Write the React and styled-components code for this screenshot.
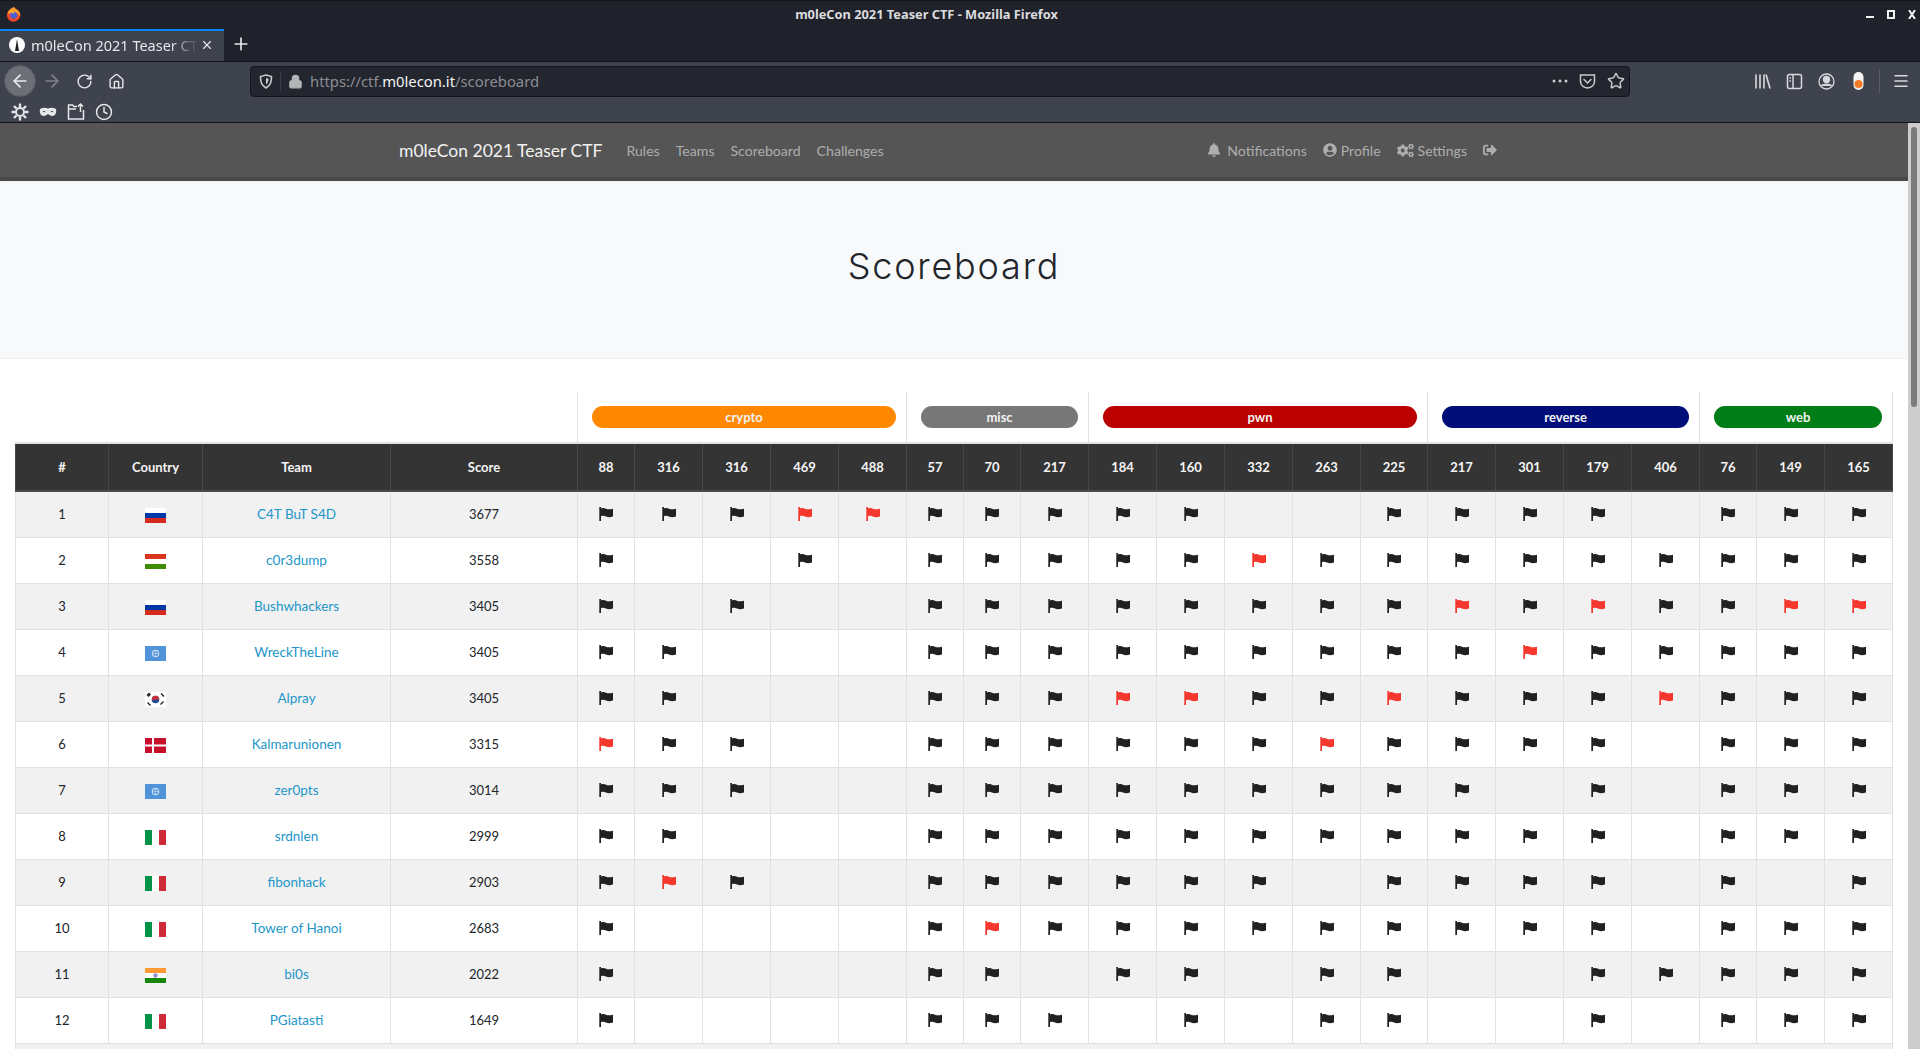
import React from "react"
import styled, { createGlobalStyle } from "styled-components"
import { FaBell, FaUserCircle, FaCogs, FaSignOutAlt } from "react-icons/fa"
import { ArrowLeft, ArrowRight, RotateCw, House, Lock, Star, Clock, X, Plus, Menu } from "lucide-react"

const GlobalStyle = createGlobalStyle`
  html, body {
    margin: 0;
    padding: 0;
    height: 100%;
    overflow: hidden;
    background: #fff;
  }
  * { box-sizing: border-box; }
`

const Frame = styled.div`
  height: 100vh;
  display: flex;
  flex-direction: column;
  overflow: hidden;
  font-family: "Noto Sans", sans-serif;
`

/* browser chrome */

const TitleBar = styled.div`
  height: 29px;
  flex: none;
  display: flex;
  align-items: center;
  padding: 0 0 2px 6px;
  background: #1f212b;
  border-top: 1px solid #14151b;
`

const WindowTitle = styled.div`
  margin-left: 773px;
  width: 265px;
  text-align: center;
  white-space: nowrap;
  font-size: 12.800px;
  font-weight: 700;
  color: #dcdcdf;
`

const WindowButtons = styled.div`
  margin-left: auto;
  display: flex;
  align-items: center;
  gap: 13px;
  padding-right: 4px;
`

const TabStrip = styled.div`
  height: 32px;
  flex: none;
  display: flex;
  align-items: stretch;
  background: #1f212b;
`

const Tab = styled.div`
  width: 224px;
  display: flex;
  align-items: center;
  padding: 0 10px 3px 9px;
  background: #3f434e;
  border-top: 2px solid #0a84ff;
  color: #e6e7ea;
`

const TabLabel = styled.span`
  margin-left: 6px;
  flex: 1;
  overflow: hidden;
  white-space: nowrap;
  font-size: 14.500px;
  mask-image: linear-gradient(to right, #000 82%, transparent 99%);
`

const NewTab = styled.div`
  margin-left: 7px;
  padding-bottom: 3px;
  display: flex;
  align-items: center;
  color: #e6e7ea;
`

const NavToolbar = styled.div`
  height: 39px;
  flex: none;
  display: flex;
  align-items: center;
  background: #3f434e;
  border-top: 1px solid #14151b;
`

const NavButtons = styled.div`
  width: 250px;
  display: flex;
  align-items: center;
  padding-left: 4px;
`

const BackCircle = styled.div`
  width: 32px;
  height: 32px;
  border-radius: 50%;
  background: #6c6f76;
  border: 1px solid #565962;
  display: flex;
  align-items: center;
  justify-content: center;
  color: #ececee;
`

const NavIcon = styled.div`
  width: 32px;
  display: flex;
  justify-content: center;
  color: ${p => (p.$dim ? "#80838b" : "#e6e7ea")};
`

const UrlBar = styled.div`
  width: 1380px;
  height: 31px;
  display: flex;
  align-items: center;
  background: #23252f;
  border: 1px solid #15161c;
  border-radius: 4px;
  color: #c9cace;
`

const ShieldBox = styled.div`
  width: 30px;
  height: 20px;
  display: flex;
  align-items: center;
  justify-content: center;
  border-right: 1px solid #3b3d47;
`

const LockBox = styled.div`
  width: 28px;
  margin-right: 1px;
  display: flex;
  justify-content: center;
  color: #b4b5b9;
`

const UrlText = styled.div`
  flex: 1;
  font-size: 14.800px;
  color: #8c8d93;
  white-space: nowrap;

  b {
    font-weight: 400;
    color: #f4f4f5;
  }
`

const UrlActions = styled.div`
  display: flex;
  align-items: center;
  gap: 11px;
  padding-right: 4px;
`

const ToolIcons = styled.div`
  flex: 1;
  display: flex;
  align-items: center;
  justify-content: flex-end;
  gap: 15px;
  color: #d8d9dc;
  padding-right: 10px;
`

const ToolSep = styled.div`
  width: 1px;
  height: 24px;
  background: #5b5e68;
  margin: 0 -3px;
`

const BookmarksBar = styled.div`
  height: 23px;
  flex: none;
  display: flex;
  align-items: center;
  gap: 10px;
  padding: 1px 0 0 11px;
  background: #3f434e;
  border-bottom: 1px solid #14151b;
  color: #e6e7ea;
`

const Viewport = styled.div`
  flex: 1;
  min-height: 0;
  display: flex;
`

const Page = styled.div`
  flex: 1;
  min-width: 0;
  overflow: hidden;
  background: #fff;
`

const ScrollTrack = styled.div`
  width: 12px;
  flex: none;
  padding: 4px 3px;
  background: #cdcdcd;
`

const ScrollThumb = styled.div`
  height: 280px;
  border-radius: 3px;
  background: #7c7c7c;
`

/* site navbar */

const Navbar = styled.nav`
  height: 58px;
  background: #555;
  border-bottom: 4px solid #494949;
`

const NavContainer = styled.div`
  width: 1110px;
  height: 100%;
  margin: 0 auto;
  display: flex;
  align-items: center;
  justify-content: space-between;
  font-family: Lato, sans-serif;
`

const NavLeft = styled.div`
  display: flex;
  align-items: center;
`

const Brand = styled.a`
  margin-right: 16px;
  font-size: 17.500px;
  color: #f2f2f2;
`

const NavLink = styled.a`
  display: flex;
  align-items: center;
  gap: 4px;
  padding: 0 8px;
  font-size: 14.100px;
  color: #aeaeae;
`

const NavRight = styled.div`
  display: flex;
  align-items: center;
  padding-right: 4px;
`

const BellIcon = styled(FaBell)`
  margin-right: 2px;
`

const Jumbotron = styled.header`
  height: 178px;
  margin-bottom: 33px;
  padding-bottom: 9px;
  display: flex;
  align-items: center;
  justify-content: center;
  background: #f8f9fa;
  border-top: 1px solid #eee;
  border-bottom: 1px solid #eef0f2;
  border-radius: 4px;
`

const Title = styled.h1`
  margin: 0;
  font-family: Inter, sans-serif;
  font-size: 36px;
  font-weight: 300;
  letter-spacing: 1.800px;
  color: #212529;
`

/* scoreboard */

const Wrap = styled.div`
  padding: 0 15px;
`

const Table = styled.table`
  width: 1876px;
  table-layout: fixed;
  border-collapse: collapse;
  font-family: Lato, sans-serif;
  font-size: 13px;
  color: #212529;
`

const Col = styled.col`
  width: ${p => p.$w}px;
`

const CategoryBlank = styled.th`
  height: 51px;
  padding: 0;
  border-bottom: 2px solid #dee2e6;
`

const CategoryCell = styled.th`
  padding: 0 10px 0 14px;
  border: 1px solid #dee2e6;
  border-top: 0;
  border-bottom: 2px solid #dee2e6;
`

const Pill = styled.div`
  height: 22px;
  line-height: 22px;
  border-radius: 11px;
  font-size: 13px;
  font-weight: 700;
  text-align: center;
  color: #f2f2f2;
  background: ${p => p.$color};
`

const HeadCell = styled.th`
  height: 48px;
  padding: 0;
  text-align: center;
  font-weight: 700;
  color: #f4f4f4;
  background: #343434;
  border: 1px solid #474747;
  border-bottom: 2px solid #4a4a4a;
  border-top: 0;
`

const Row = styled.tr`
  background: ${p => (p.$odd ? "#f1f1f2" : "#fff")};
`

const Cell = styled.td`
  height: 46px;
  padding: 0;
  text-align: center;
  border: 1px solid #dee2e6;
`

const TeamLink = styled.a`
  font-size: 13.500px;
  color: #2196c8;
`

const SolveFlag = styled.svg`
  display: block;
  margin: 0 auto;
  color: ${p => (p.$first ? "#f5372e" : "#212121")};
`

const CountryFlag = styled.svg`
  display: block;
  margin: 3px auto 0;
`

const Solve = ({ first }) => (
  <SolveFlag $first={first} width="14" height="14" viewBox="0 0 14 14" fill="currentColor">
    <rect x=".3" y="0" width="1.700" height="14" />
    <path d="M2 1.500c2-.8 3.500-.6 5 .2s3.500 .8 7 0v7.800c-3 .9-5 .8-7 0s-3.500-.8-5-.2z" />
  </SolveFlag>
)

const Firefox = () => (
  <svg width="15" height="15" viewBox="0 0 16 16">
    <circle cx="8" cy="8.7" r="7" fill="#f0482c" />
    <path d="M2 6C3 2.500 7 .5 9 0c0 2 3 2 5 5 1.500 2 1.500 4 1 5-2-4-6-5-8-4S2 8 2 6z" fill="#ff9d2c" />
    <circle cx="8.200" cy="8.800" r="3.700" fill="#4a5fd6" />
    <path d="M5 6c1-1.500 3-1.500 4.500-1L8 7z" fill="#ffb03a" />
  </svg>
)

const Favicon = () => (
  <svg width="16" height="16" viewBox="0 0 16 16">
    <circle cx="8" cy="8" r="8" fill="#fff" />
    <path d="M8 2l1.300 8 .7 4H6l.7-4z" fill="#222" />
  </svg>
)

const Shield = () => (
  <svg width="14" height="15" viewBox="0 0 14 15" fill="none" stroke="#c9cace" strokeWidth="1.600">
    <path d="M7 1l5.500 1.500c0 5-.5 8.500-5.500 11.500C2 11 1.500 7.500 1.500 2.500z" />
    <path d="M7 4l2.500.7C9.500 7 9 9 7 10.500z" fill="#c9cace" stroke="none" />
  </svg>
)

const Dots = () => (
  <svg width="16" height="4" viewBox="0 0 16 4" fill="#c9cace">
    <circle cx="2" cy="2" r="1.500" />
    <circle cx="8" cy="2" r="1.500" />
    <circle cx="14" cy="2" r="1.500" />
  </svg>
)

const Pocket = () => (
  <svg width="17" height="17" viewBox="0 0 17 17" fill="none" stroke="#c9cace" strokeWidth="1.500">
    <path d="M1.500 2h14v6.500c0 3.500-3 6.500-7 6.500s-7-3-7-6.500z" />
    <path d="M5 6.500l3.500 3.500L12 6.500" strokeLinecap="round" />
  </svg>
)

const Library = () => (
  <svg width="17" height="17" viewBox="0 0 17 17" fill="none" stroke="#d8d9dc" strokeWidth="1.600">
    <path d="M2 1.500v14M6 1.500v14M10 1.500v14M12 1.500l4 14" />
  </svg>
)

const Sidebar = () => (
  <svg width="17" height="17" viewBox="0 0 17 17" fill="none" stroke="#d8d9dc" strokeWidth="1.500">
    <rect x="1.500" y="1.500" width="14" height="14" rx="2" />
    <path d="M7 1.500v14M3.500 5H5M3.500 8H5" />
  </svg>
)

const Account = () => (
  <svg width="17" height="17" viewBox="0 0 17 17" fill="none" stroke="#d8d9dc" strokeWidth="1.300">
    <circle cx="8.500" cy="8.500" r="7.500" />
    <circle cx="8.500" cy="6.500" r="3" fill="#d8d9dc" />
    <path d="M3.500 13c1-2.500 9-2.500 10 0" fill="#d8d9dc" />
  </svg>
)

const Extension = () => (
  <svg width="17" height="18" viewBox="0 0 17 18">
    <rect x="3.500" y="0" width="10" height="18" rx="5" fill="#f4f4f4" />
    <circle cx="8.500" cy="12" r="4" fill="#f47a24" />
  </svg>
)

const Gear = () => (
  <svg width="18" height="18" viewBox="0 0 18 18" fill="none" stroke="#e6e7ea">
    <circle cx="9" cy="9" r="4" strokeWidth="2" />
    <path d="M9 .5v3.500M9 14v3.500M.5 9H4M14 9h3.500M3 3l2.500 2.500M12.500 12.500L15 15M15 3l-2.500 2.500M5.500 12.500L3 15" strokeWidth="2.400" />
  </svg>
)

const Mask = () => (
  <svg width="18" height="10" viewBox="0 0 18 10" fill="#e6e7ea">
    <path fillRule="evenodd" d="M1 2c2.500-1.500 5.500-1.500 8-.5 2.500-1 5.500-1 8 .5 .8 3.500-.5 7-4 7-2 0-2.700-1.700-4-1.700S7 9 5 9C1.500 9 .2 5.500 1 2zm2.500 2.500c.8-.7 2.200-.7 3 0-.8 1-2.200 1-3 0zm8 0c.8-.7 2.200-.7 3 0-.8 1-2.200 1-3 0z" />
  </svg>
)

const Synced = () => (
  <svg width="18" height="18" viewBox="0 0 18 18" fill="none" stroke="#e6e7ea" strokeWidth="1.500">
    <path d="M10 3.500H7L5.500 2H1.500v14h15V7" />
    <path d="M1.500 6H9M13.500 9V1.500M11 3.500l2.500-2.500L16 3.500" />
  </svg>
)

const WinMin = () => (
  <svg width="8" height="8" viewBox="0 0 8 8"><rect y="6" width="8" height="2" fill="#f2f2f2" /></svg>
)
const WinMax = () => (
  <svg width="8" height="9" viewBox="0 0 8 9" fill="none" stroke="#f2f2f2" strokeWidth="2"><rect x="1" y="1" width="6" height="7" /></svg>
)
const WinClose = () => (
  <svg width="8" height="9" viewBox="0 0 8 9" stroke="#f2f2f2" strokeWidth="2"><path d="M1 0l6 9M7 0L1 9" /></svg>
)

const flagArt = {
  ru: (
    <>
      <rect width="21" height="5" fill="#fff" />
      <rect y="5" width="21" height="5" fill="#0039a6" />
      <rect y="10" width="21" height="5" fill="#d52b1e" />
    </>
  ),
  hu: (
    <>
      <rect width="21" height="5" fill="#d8351c" />
      <rect y="5" width="21" height="5" fill="#fff" />
      <rect y="10" width="21" height="5" fill="#3f8b04" />
    </>
  ),
  un: (
    <>
      <rect width="21" height="15" fill="#4f93d9" />
      <circle cx="10.500" cy="7.500" r="3.200" fill="none" stroke="#c4d9f2" strokeWidth="1.200" />
      <path d="M10.500 4.500v6M7.500 7.500h6" stroke="#c4d9f2" strokeWidth=".7" />
    </>
  ),
  kr: (
    <>
      <rect width="21" height="15" fill="#fff" />
      <circle cx="10.500" cy="7.500" r="3.800" fill="#1c4f9c" />
      <path d="M6.900 7a3.700 3.700 0 0 1 7.300-.3c-1 2-2.500 .3-3.600 .8S8.500 9.500 6.900 7z" fill="#cd2e3a" />
      <path d="M2 3.500l2.500-2.500M3 4.500l2.500-2.500M16 1.500l3 3M15.500 12.500l3-3M2.500 10.500l3 3" stroke="#222" strokeWidth="1.400" />
    </>
  ),
  dk: (
    <>
      <rect width="21" height="15" fill="#c8102e" />
      <rect x="7" width="2" height="15" fill="#fff" />
      <rect y="6.500" width="21" height="2" fill="#fff" />
    </>
  ),
  it: (
    <>
      <rect width="7" height="15" fill="#009246" />
      <rect x="7" width="7" height="15" fill="#fff" />
      <rect x="14" width="7" height="15" fill="#ce2b37" />
    </>
  ),
  in: (
    <>
      <rect width="21" height="5" fill="#ff9933" />
      <rect y="5" width="21" height="5" fill="#fff" />
      <rect y="10" width="21" height="5" fill="#138808" />
      <circle cx="10.500" cy="7.500" r="2.200" fill="#8f8fd6" />
    </>
  ),
}

const challenges = [
  [88, 57], [316, 68], [316, 68], [469, 68], [488, 68],
  [57, 57], [70, 57], [217, 68],
  [184, 68], [160, 68], [332, 68], [263, 68], [225, 67],
  [217, 68], [301, 68], [179, 68], [406, 68],
  [76, 57], [149, 68], [165, 68],
]

const categories = [
  { name: "crypto", span: 5, color: "#ff8800" },
  { name: "misc", span: 3, color: "#777777" },
  { name: "pwn", span: 5, color: "#bb0000" },
  { name: "reverse", span: 4, color: "#000e7a" },
  { name: "web", span: 3, color: "#017d17" },
]

// x solved, r first blood, . nothing
const teams = [
  ["ru", "C4T BuT S4D", 3677, "xxxrrxxxxx..xxxx.xxx"],
  ["hu", "c0r3dump", 3558, "x..x.xxxxxrxxxxxxxxx"],
  ["ru", "Bushwhackers", 3405, "x.x..xxxxxxxxrxrxxrr"],
  ["un", "WreckTheLine", 3405, "xx...xxxxxxxxxrxxxxx"],
  ["kr", "Alpray", 3405, "xx...xxxrrxxrxxxrxxx"],
  ["dk", "Kalmarunionen", 3315, "rxx..xxxxxxrxxxx.xxx"],
  ["un", "zer0pts", 3014, "xxx..xxxxxxxxx.x.xxx"],
  ["it", "srdnlen", 2999, "xx...xxxxxxxxxxx.xxx"],
  ["it", "fibonhack", 2903, "xrx..xxxxxx.xxxx.x.x"],
  ["it", "Tower of Hanoi", 2683, "x....xrxxxxxxxxx.xxx"],
  ["in", "bi0s", 2022, "x....xx.xx.xx..xxxxx"],
  ["it", "PGiatasti", 1649, "x....xxx.x.xx..x.xxx"],
]

const App = () => {
  return (
    <Frame>
      <GlobalStyle />
      <TitleBar>
        <Firefox />
        <WindowTitle>m0leCon 2021 Teaser CTF - Mozilla Firefox</WindowTitle>
        <WindowButtons>
          <WinMin />
          <WinMax />
          <WinClose />
        </WindowButtons>
      </TitleBar>
      <TabStrip>
        <Tab>
          <Favicon />
          <TabLabel>m0leCon 2021 Teaser CTF</TabLabel>
          <X size={14} strokeWidth={2} />
        </Tab>
        <NewTab>
          <Plus size={20} strokeWidth={2} />
        </NewTab>
      </TabStrip>
      <NavToolbar>
        <NavButtons>
          <BackCircle>
            <ArrowLeft size={20} />
          </BackCircle>
          <NavIcon $dim>
            <ArrowRight size={20} />
          </NavIcon>
          <NavIcon>
            <RotateCw size={17} />
          </NavIcon>
          <NavIcon>
            <House size={17} />
          </NavIcon>
        </NavButtons>
        <UrlBar>
          <ShieldBox>
            <Shield />
          </ShieldBox>
          <LockBox>
            <Lock size={15} fill="#b4b5b9" />
          </LockBox>
          <UrlText>
            https://ctf.<b>m0lecon.it</b>/scoreboard
          </UrlText>
          <UrlActions>
            <Dots />
            <Pocket />
            <Star size={18} />
          </UrlActions>
        </UrlBar>
        <ToolIcons>
          <Library />
          <Sidebar />
          <Account />
          <Extension />
          <ToolSep />
          <Menu size={18} />
        </ToolIcons>
      </NavToolbar>
      <BookmarksBar>
        <Gear />
        <Mask />
        <Synced />
        <Clock size={18} />
      </BookmarksBar>
      <Viewport>
        <Page>
          <Navbar>
            <NavContainer>
              <NavLeft>
                <Brand>m0leCon 2021 Teaser CTF</Brand>
                <NavLink>Rules</NavLink>
                <NavLink>Teams</NavLink>
                <NavLink>Scoreboard</NavLink>
                <NavLink>Challenges</NavLink>
              </NavLeft>
              <NavRight>
                <NavLink>
                  <BellIcon size={14} /> Notifications
                </NavLink>
                <NavLink>
                  <FaUserCircle size={14} /> Profile
                </NavLink>
                <NavLink>
                  <FaCogs size={17} /> Settings
                </NavLink>
                <NavLink>
                  <FaSignOutAlt size={14} />
                </NavLink>
              </NavRight>
            </NavContainer>
          </Navbar>
          <Jumbotron>
            <Title>Scoreboard</Title>
          </Jumbotron>
          <Wrap>
            <Table>
              <colgroup>
                <Col $w={93} />
                <Col $w={94} />
                <Col $w={188} />
                <Col $w={187} />
                {challenges.map(([score, w], i) => (
                  <Col key={i} $w={w} />
                ))}
              </colgroup>
              <thead>
                <tr>
                  <CategoryBlank colSpan={4} />
                  {categories.map(c => (
                    <CategoryCell key={c.name} colSpan={c.span}>
                      <Pill $color={c.color}>{c.name}</Pill>
                    </CategoryCell>
                  ))}
                </tr>
                <tr>
                  <HeadCell>#</HeadCell>
                  <HeadCell>Country</HeadCell>
                  <HeadCell>Team</HeadCell>
                  <HeadCell>Score</HeadCell>
                  {challenges.map(([score], i) => (
                    <HeadCell key={i}>{score}</HeadCell>
                  ))}
                </tr>
              </thead>
              <tbody>
                {teams.map(([country, name, score, solves], i) => (
                  <Row key={name} $odd={i % 2 === 0}>
                    <Cell>{i + 1}</Cell>
                    <Cell>
                      <CountryFlag width="21" height="15" viewBox="0 0 21 15">
                        {flagArt[country]}
                      </CountryFlag>
                    </Cell>
                    <Cell>
                      <TeamLink>{name}</TeamLink>
                    </Cell>
                    <Cell>{score}</Cell>
                    {solves.split("").map((s, j) => (
                      <Cell key={j}>
                        {s !== "." && <Solve first={s === "r"} />}
                      </Cell>
                    ))}
                  </Row>
                ))}
                <Row $odd>
                  <Cell colSpan={24} />
                </Row>
              </tbody>
            </Table>
          </Wrap>
        </Page>
        <ScrollTrack>
          <ScrollThumb />
        </ScrollTrack>
      </Viewport>
    </Frame>
  )
}

export default App
